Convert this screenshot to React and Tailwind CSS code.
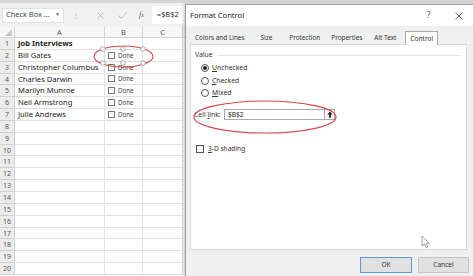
import React from "react";

const rows = [
  ["Job Interviews", null, true],
  ["Bill Gates", "Done"],
  ["Christopher Columbus", "Done"],
  ["Charles Darwin", "Done"],
  ["Marilyn Munroe", "Done"],
  ["Neil Armstrong", "Done"],
  ["Julie Andrews", "Done"],
];

function Sheet() {
  const all = Array.from({ length: 20 }, (_, i) => rows[i] || ["", null]);
  return (
    <div className="flex flex-col w-[186px]">
      <div className="flex h-[11px] bg-[#f7f7f7] border-b border-[#d4d4d4] text-[#555] text-[7.5px] leading-[11px]">
        <div className="w-[15px] relative border-r border-[#d4d4d4]">
          <svg width="7" height="7" className="absolute right-[2px] bottom-[1px]">
            <polygon points="7,0 7,7 0,7" fill="#c8c8c8" />
          </svg>
        </div>
        <div className="w-[90px] text-center border-r border-[#d4d4d4]">A</div>
        <div className="w-[38px] text-center border-r border-[#d4d4d4]">B</div>
        <div className="w-[40px] text-center border-r border-[#d4d4d4]">C</div>
      </div>
      {all.map((r, i) => (
        <div key={i} className="flex h-[11.85px] text-[7.6px] leading-[11px]">
          <div className="w-[15px] bg-[#ececec] text-[#555] text-center border-r border-b border-[#d0d0d0] text-[7px]">{i + 1}</div>
          <div className={"w-[90px] pl-[3px] border-r border-b border-[#e0e0e0] text-[#1a1a1a] whitespace-nowrap " + (r[2] ? "font-bold" : "")}>{r[0]}</div>
          <div className="w-[38px] border-r border-b border-[#e0e0e0] flex items-center pl-[3px] gap-[3px]">
            {r[1] && (
              <>
                <span className="w-[7px] h-[7px] border border-[#777] bg-white"></span>
                <span className="text-[6.2px] text-[#444]">Done</span>
              </>
            )}
          </div>
          <div className="w-[40px] border-r border-b border-[#e0e0e0]"></div>
        </div>
      ))}
    </div>
  );
}

function Radio({ label, u, rest, checked }) {
  return (
    <div className="flex items-center h-[12.5px] pl-[10px] gap-[3px]">
      <span className="w-[8px] h-[8px] rounded-full border border-[#555] bg-white flex items-center justify-center">
        {checked && <span className="w-[4px] h-[4px] rounded-full bg-[#222]"></span>}
      </span>
      <span className="text-[6.8px] text-[#333]"><span className="underline">{u}</span>{rest}</span>
    </div>
  );
}

function Dialog() {
  const tabs = [
    ["Colors and Lines", "ml-[9px]"],
    ["Size", "ml-[16px]"],
    ["Protection", "ml-[17px]"],
    ["Properties", "ml-[11px]"],
    ["Alt Text", "ml-[12px]"],
  ];
  return (
    <div className="absolute left-[185px] top-[4px] w-[295px] h-[276px] bg-[#f0f0f0] border border-[#9e9e9e] shadow-[-1px_0_3px_rgba(0,0,0,0.25)] flex flex-col">
      <div className="h-[21px] bg-white flex items-center relative">
        <span className="pl-[4px] text-[7.6px] text-[#222]">Format Control</span>
        <span className="absolute left-[241px] top-[4px] text-[8px] text-[#444]">?</span>
        <svg className="absolute left-[269px] top-[7px]" width="8" height="8">
          <path d="M0.5 0.5 L7.5 7.5 M7.5 0.5 L0.5 7.5" stroke="#444" strokeWidth="0.8" />
        </svg>
      </div>
      <div className="h-[18px] flex items-end text-[6.4px] text-[#333] relative">
        {tabs.map(([t, m]) => (
          <span key={t} className={m + " h-[13px] leading-[13px]"}>{t}</span>
        ))}
        <span className="ml-[9px] h-[14px] px-[4px] leading-[13px] bg-white border border-b-0 border-[#aaa] text-[6.6px] relative top-[1px] z-10">Control</span>
      </div>
      <div className="ml-[4px] w-[277px] h-[206px] bg-white border border-[#d9d9d9] relative">
        <div className="flex items-center pl-[4px] pt-[5px] gap-[4px]">
          <span className="text-[6.8px] text-[#333]">Value</span>
          <span className="flex-1 h-px bg-[#e3e3e3] mr-[6px]"></span>
        </div>
        <div className="pt-[2px]">
          <Radio u="U" rest="nchecked" checked />
          <Radio u="C" rest="hecked" />
          <Radio u="M" rest="ixed" />
        </div>
        <div className="flex items-center pl-[3px] mt-[9px] h-[12px]">
          <span className="text-[6.8px] text-[#333] w-[30px]">Cell <span className="underline">l</span>ink:</span>
          <div className="w-[101px] h-[11px] border border-[#aaa] bg-white text-[6.6px] leading-[9px] pl-[3px] text-[#222]">$B$2</div>
          <div className="w-[10px] h-[11px] border border-l-0 border-[#aaa] bg-[#f4f4f4] flex items-center justify-center">
            <svg width="6" height="7" viewBox="0 0 6 7">
              <path d="M3 0.5 L5.7 3.5 L3.9 3.5 L3.9 6.8 L2.1 6.8 L2.1 3.5 L0.3 3.5 Z" fill="#222" />
            </svg>
          </div>
        </div>
        <div className="flex items-center pl-[5px] mt-[23px] gap-[4px]">
          <span className="w-[8px] h-[8px] border border-[#555] bg-white"></span>
          <span className="text-[6.6px] text-[#333]"><span className="underline">3</span>-D shading</span>
        </div>
        <svg className="absolute left-[230px] top-[190px]" width="10" height="14" viewBox="0 0 10 14">
          <path d="M1 1 L1 11 L3.5 8.8 L5.3 12.8 L6.9 12.1 L5.2 8.3 L8.4 8.3 Z" fill="#fff" stroke="#888" strokeWidth="0.8" />
        </svg>
      </div>
      <div className="flex mt-[7px] ml-[174px] gap-[6px]">
        <div className="w-[52px] h-[16px] bg-[#e1e1e1] border border-[#5a9bd8] text-[6.6px] text-[#333] flex items-center justify-center">OK</div>
        <div className="w-[51px] h-[16px] bg-[#e1e1e1] border border-[#c4c4c4] text-[6.6px] text-[#333] flex items-center justify-center">Cancel</div>
      </div>
      <svg className="absolute left-[6px] top-[94px]" width="146" height="36">
        <ellipse cx="73" cy="18" rx="71" ry="16" fill="none" stroke="#d54a4a" strokeWidth="1.2" />
      </svg>
    </div>
  );
}

export default function App() {
  return (
    <div className="w-[473px] h-[276px] relative overflow-hidden bg-white font-['Noto_Sans',sans-serif]">
      <div className="h-[3px] bg-[#d6d6d6]"></div>
      <div className="h-[24px] bg-[#f1f1f1] flex items-center text-[#444]">
        <div className="ml-[2px] w-[62px] h-[15px] bg-white border border-[#e2e2e2] flex items-center justify-between px-[3px]">
          <span className="text-[7.4px] text-[#444]">Check Box ...</span>
          <span className="text-[5px] text-[#666]">▼</span>
        </div>
        <span className="ml-[8px] text-[#aaa] text-[8px]">⋮</span>
        <svg className="ml-[17px]" width="7" height="7"><path d="M0.5 0.5 L6.5 6.5 M6.5 0.5 L0.5 6.5" stroke="#b8b8b8" strokeWidth="0.9" /></svg>
        <svg className="ml-[14px]" width="9" height="7"><path d="M0.5 3.5 L3.3 6.3 L8.5 0.5" stroke="#b8b8b8" strokeWidth="0.9" fill="none" /></svg>
        <span className="ml-[12px] italic text-[8px] text-[#666] font-['Liberation_Serif',serif]">f<span className="text-[6px]">x</span></span>
        <div className="ml-[8px] flex-1 h-[18px] bg-white flex items-center pl-[5px] text-[7.4px] text-[#333]">=$B$2</div>
      </div>
      <Sheet />
      <svg className="absolute left-[92px] top-[44px]" width="64" height="26">
        <ellipse cx="31.5" cy="12.5" rx="29.5" ry="10.5" fill="none" stroke="#d54a4a" strokeWidth="1.1" />
        {[[11, 5], [31, 5], [51, 5], [11, 19], [31, 19], [51, 19]].map(([x, y], i) => (
          <circle key={i} cx={x} cy={y} r="2.3" fill="#fff" stroke="#888" strokeWidth="0.7" />
        ))}
      </svg>
      <Dialog />
    </div>
  );
}
